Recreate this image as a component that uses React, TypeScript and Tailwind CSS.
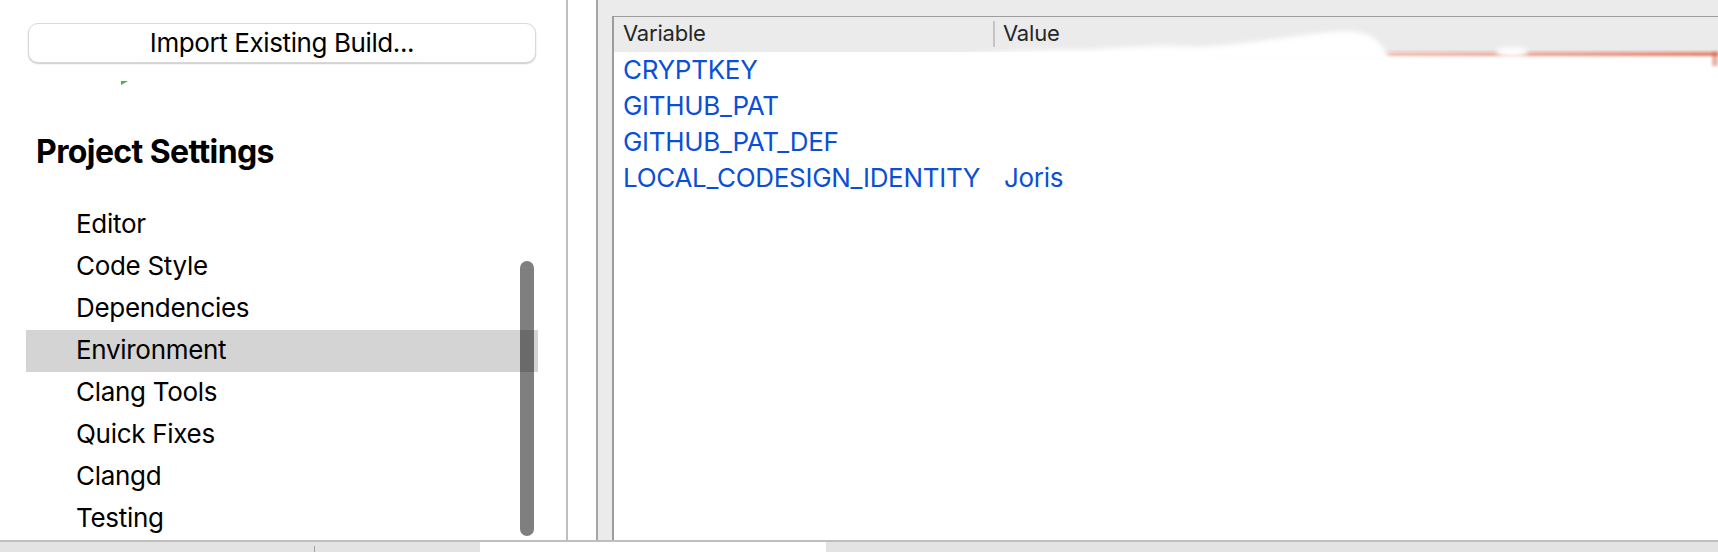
import React from "react";

const font = { fontFamily: "Inter, 'Noto Sans', sans-serif" };

const items = [
  "Editor",
  "Code Style",
  "Dependencies",
  "Environment",
  "Clang Tools",
  "Quick Fixes",
  "Clangd",
  "Testing",
];

const vars: [string, string][] = [
  ["CRYPTKEY", ""],
  ["GITHUB_PAT", ""],
  ["GITHUB_PAT_DEF", ""],
  ["LOCAL_CODESIGN_IDENTITY", "Joris"],
];

export default function App() {
  return (
    <div
      className="relative w-[1718px] h-[552px] overflow-hidden bg-white flex flex-col"
      style={font}
    >
      <div className="flex h-[540px]">
        {/* Left panel */}
        <div className="relative w-[566px] h-full bg-white flex flex-col">
          <div className="ml-[28px] mt-[23px] w-[508px] h-[40px] rounded-[10px] border border-[#d9d9d9] bg-white shadow-[0_1px_1.5px_rgba(0,0,0,0.22)] flex items-center justify-center text-[26px] text-black tracking-[-0.4px] pb-[1px]">
            Import Existing Build...
          </div>
          <svg className="absolute left-[121px] top-[81px]" width="8" height="5" viewBox="0 0 8 5">
            <polygon points="0,0 7,0 0,4" fill="#3fb93a" />
          </svg>
          <div className="ml-[36px] mt-[69px] text-[32px] leading-[40px] font-bold text-black tracking-[-0.6px]">
            Project Settings
          </div>
          <div className="ml-[26px] mt-[32px] w-[512px] flex flex-col">
            {items.map((it) => (
              <div
                key={it}
                className={
                  "h-[42px] pl-[50px] pb-[3px] flex items-center text-[26px] text-black tracking-[-0.3px] " +
                  (it === "Environment" ? "bg-[#d4d4d4]" : "")
                }
              >
                {it}
              </div>
            ))}
          </div>
          {/* scrollbar */}
          <div className="absolute left-[520px] top-[261px] w-[14px] h-[275px] rounded-full bg-[rgba(0,0,0,0.5)]" />
        </div>
        <div className="w-[2px] h-full bg-[#bebebe]" />
        <div className="w-[28px] h-full bg-white" />
        <div className="w-[2px] h-full bg-[#a6a6a6]" />
        {/* Right area */}
        <div className="flex-1 h-full bg-[#ebebeb] pl-[14px] pt-[16px] flex">
          <div className="flex-1 flex flex-col border-l-2 border-t border-[#9c9c9c]">
            <div className="h-[35px] bg-[#ebebeb] flex items-center text-[22px] text-[#262626] tracking-[-0.2px] pb-[3px]">
              <div className="w-[379px] pl-[9px] flex items-center">Variable</div>
              <div className="w-[2px] h-[26px] bg-[#c4c4c4] mt-[2px]" />
              <div className="pl-[8px]">Value</div>
            </div>
            <div className="flex-1 bg-white flex flex-col">
              {vars.map(([k, v]) => (
                <div
                  key={k}
                  className="h-[36px] flex items-center text-[26px] text-[#0b4fd6] tracking-[-0.3px] pb-[2px]"
                >
                  <div className="w-[381px] pl-[9px] whitespace-nowrap">{k}</div>
                  <div className="pl-[9px]">{v}</div>
                </div>
              ))}
            </div>
          </div>
        </div>
      </div>
      <div className="h-[2px] bg-[#bebebe]" />
      <div className="h-[10px] flex">
        <div className="relative w-[480px] h-full bg-[#e3e3e3]">
          <div className="absolute left-[314px] top-[4px] w-[1px] h-[6px] bg-[#9f9f9f]" />
        </div>
        <div className="w-[346px] h-full bg-white" />
        <div className="flex-1 h-full bg-[#e3e3e3]" />
      </div>

      {/* redaction smudge overlay */}
      <svg
        className="absolute left-0 top-0 pointer-events-none"
        width="1718"
        height="90"
        viewBox="0 0 1718 90"
      >
        <defs>
          <filter id="b1" x="-20%" y="-200%" width="140%" height="500%">
            <feGaussianBlur stdDeviation="2.5" />
          </filter>
          <filter id="b2" x="-20%" y="-100%" width="140%" height="300%">
            <feGaussianBlur stdDeviation="1.5" />
          </filter>
          <linearGradient id="rg" x1="0" y1="0" x2="1" y2="0">
            <stop offset="0" stopColor="#e79a88" stopOpacity="0" />
            <stop offset="0.15" stopColor="#e79a88" stopOpacity="0.5" />
            <stop offset="0.5" stopColor="#e48f7a" stopOpacity="0.7" />
            <stop offset="1" stopColor="#d9664d" stopOpacity="0.9" />
          </linearGradient>
        </defs>
        <rect x="1170" y="52" width="548" height="4" fill="url(#rg)" filter="url(#b2)" />
        <rect x="1712" y="52" width="6" height="14" fill="#d9664d" opacity="0.5" filter="url(#b2)" />
        <path
          d="M955 56 C 990 53, 1030 49, 1080 50 C 1120 48, 1150 44, 1200 47 C 1250 44, 1290 36, 1330 32 C 1350 30, 1370 32, 1378 42 L 1388 54 L 1388 60 L 955 60 Z"
          fill="#ffffff"
          filter="url(#b1)"
        />
        <ellipse cx="1512" cy="52" rx="16" ry="5" fill="#ffffff" filter="url(#b1)" />
      </svg>
    </div>
  );
}
